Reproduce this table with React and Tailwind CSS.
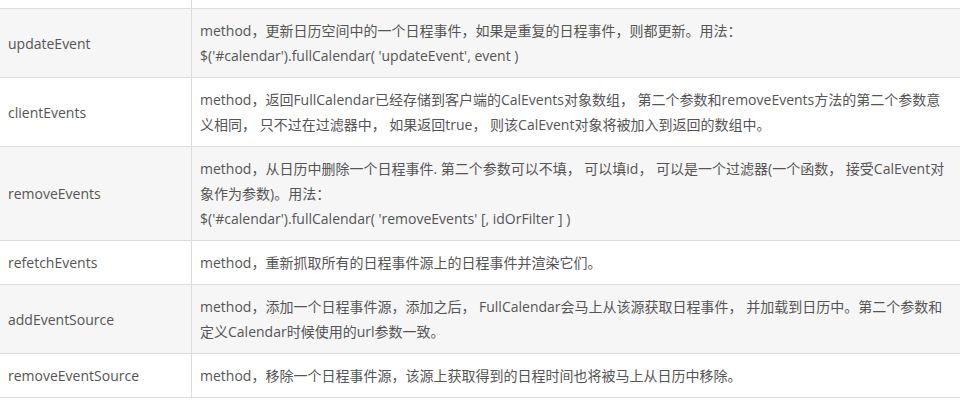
const rows = [
    {
        name: 'updateEvent',
        lines: [
            'method，更新日历空间中的一个日程事件，如果是重复的日程事件，则都更新。用法：',
            "$('#calendar').fullCalendar( 'updateEvent', event )",
        ],
    },
    {
        name: 'clientEvents',
        lines: [
            'method，返回FullCalendar已经存储到客户端的CalEvents对象数组， 第二个参数和removeEvents方法的第二个参数意',
            '义相同， 只不过在过滤器中， 如果返回true， 则该CalEvent对象将被加入到返回的数组中。',
        ],
    },
    {
        name: 'removeEvents',
        lines: [
            'method，从日历中删除一个日程事件. 第二个参数可以不填， 可以填id， 可以是一个过滤器(一个函数， 接受CalEvent对',
            '象作为参数)。用法：',
            "$('#calendar').fullCalendar( 'removeEvents' [, idOrFilter ] )",
        ],
    },
    {
        name: 'refetchEvents',
        lines: ['method，重新抓取所有的日程事件源上的日程事件并渲染它们。'],
    },
    {
        name: 'addEventSource',
        lines: [
            'method，添加一个日程事件源，添加之后， FullCalendar会马上从该源获取日程事件， 并加载到日历中。第二个参数和',
            '定义Calendar时候使用的url参数一致。',
        ],
    },
    {
        name: 'removeEventSource',
        lines: ['method，移除一个日程事件源，该源上获取得到的日程时间也将被马上从日历中移除。'],
    },
];

export default function App() {
    return (
        <div
            className="w-[960px] h-[412px] overflow-hidden bg-white text-[14px] leading-[25px] text-[#555]"
            style={{ fontFamily: '"Open Sans", "Noto Sans CJK SC", sans-serif' }}
        >
            <div className="grid grid-cols-[192px_1fr] h-[9px] border-b border-[#dcdcdc]">
                <div className="border-r border-[#dcdcdc]" />
                <div />
            </div>
            {rows.map((r, i) => (
                <div
                    key={r.name}
                    className={`grid grid-cols-[192px_1fr] border-b border-[#dcdcdc] ${i % 2 === 0 ? 'bg-[#f6f6f6]' : 'bg-white'}`}
                >
                    <div className="flex items-center px-2 py-[9px] border-r border-[#dcdcdc]">{r.name}</div>
                    <div className="px-2 py-[9px] whitespace-nowrap">
                        {r.lines.map((l) => (
                            <div key={l}>{l}</div>
                        ))}
                    </div>
                </div>
            ))}
        </div>
    );
}
